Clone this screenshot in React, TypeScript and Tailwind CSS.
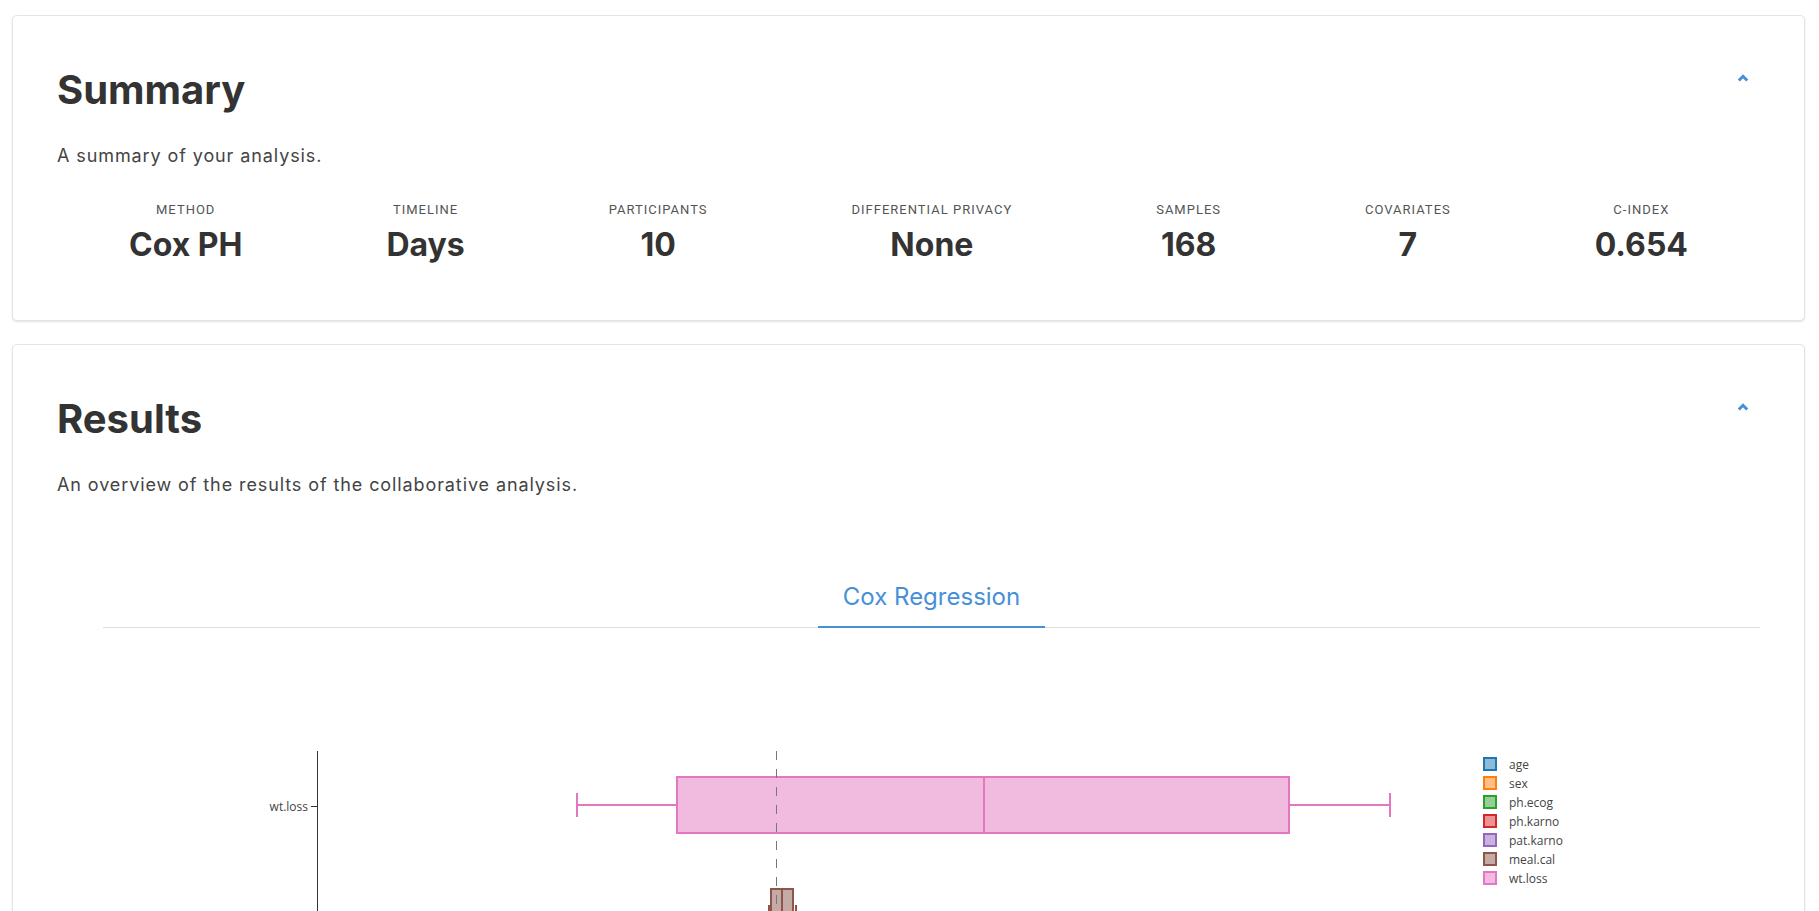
import React from 'react';

const BLUE = '#4790d8';

const stats = [
  { label: 'Method', value: 'Cox PH' },
  { label: 'Timeline', value: 'Days' },
  { label: 'Participants', value: '10' },
  { label: 'Differential Privacy', value: 'None' },
  { label: 'Samples', value: '168' },
  { label: 'Covariates', value: '7' },
  { label: 'C-Index', value: '0.654' },
];

const covariates = [
  { name: 'age', color: '#1f77b4', fill: '#8fbbd9' },
  { name: 'sex', color: '#ff7f0e', fill: '#ffbf86' },
  { name: 'ph.ecog', color: '#2ca02c', fill: '#95cf95' },
  { name: 'ph.karno', color: '#d62728', fill: '#eb9293' },
  { name: 'pat.karno', color: '#9467bd', fill: '#c9b3de' },
  { name: 'meal.cal', color: '#8c564b', fill: '#c5aaa5' },
  { name: 'wt.loss', color: '#e377c2', fill: '#f1bbe0' },
];

function Chevron() {
  return (
    <svg width="12" height="8" viewBox="0 0 12 8" fill="none">
      <polyline points="1.8,6.5 6,2.3 10.2,6.5" stroke={BLUE} strokeWidth="3" />
    </svg>
  );
}

function CardHeader({ title, subtitle }: { title: string; subtitle: string }) {
  return (
    <>
      <div className="flex items-start justify-between">
        <h2 className="text-[40px] leading-[48px] font-bold text-[#333333]">{title}</h2>
        <button className="mr-[11px] mt-[8px] flex h-[8px] w-[12px] items-center justify-center">
          <Chevron />
        </button>
      </div>
      <p className="mt-[28px] text-[18px] leading-[28px] tracking-[0.9px] text-[#444444]">{subtitle}</p>
    </>
  );
}

// one horizontal box: center y, box from q1..q3, median, whiskers lo..hi
function HBox({ cy, lo, q1, med, q3, hi, color, fill }: {
  cy: number; lo: number; q1: number; med: number; q3: number; hi: number; color: string; fill: string;
}) {
  return (
    <g stroke={color} strokeWidth="2">
      <line x1={lo} y1={cy} x2={q1} y2={cy} />
      <line x1={q3} y1={cy} x2={hi} y2={cy} />
      <line x1={lo} y1={cy - 12} x2={lo} y2={cy + 12} />
      <line x1={hi} y1={cy - 12} x2={hi} y2={cy + 12} />
      <rect x={q1} y={cy - 28} width={q3 - q1} height={56} fill={fill} />
      <line x1={med} y1={cy - 28} x2={med} y2={cy + 28} />
    </g>
  );
}

function CoxChart() {
  // only the rows that reach into the visible area; the rest sit below the fold
  const rows = [
    { name: 'wt.loss', cy: 177, lo: 520, q1: 620, med: 927, q3: 1232, hi: 1333, label: true },
    { name: 'meal.cal', cy: 289, lo: 712, q1: 714, med: 725, q3: 736, hi: 739, label: false },
  ];
  return (
    <svg width="1703" height="340" className="block" style={{ fontFamily: '"Open Sans", sans-serif' }}>
      <line x1="260.5" y1="123" x2="260.5" y2="340" stroke="#333" strokeWidth="1" />
      {rows.map((r) => {
        const c = covariates.find((v) => v.name === r.name)!;
        return (
          <g key={r.name}>
            {r.label && (
              <>
                <line x1="254" y1={r.cy + 1.5} x2="260" y2={r.cy + 1.5} stroke="#333" strokeWidth="1" />
                <text x="251" y={r.cy + 1} textAnchor="end" dominantBaseline="central" fontSize="12" fill="#444">
                  {r.name}
                </text>
              </>
            )}
            <HBox {...r} color={c.color} fill={c.fill} />
          </g>
        );
      })}
      <line x1="719.5" y1="123" x2="719.5" y2="340" stroke="#777" strokeWidth="1" strokeDasharray="9,9" />
      <g>
        {covariates.map((c, i) => {
          const cy = 136 + i * 19;
          return (
            <g key={c.name}>
              <rect x="1427" y={cy - 6} width="12" height="12" fill={c.fill} stroke={c.color} strokeWidth="2" />
              <text x="1452" y={cy} dominantBaseline="central" fontSize="12" fill="#444">
                {c.name}
              </text>
            </g>
          );
        })}
      </g>
    </svg>
  );
}

export default function App() {
  return (
    <div
      className="h-[911px] overflow-hidden bg-white pl-[12px] pr-[14px] pt-[15px]"
      style={{ fontFamily: 'Inter, "Noto Sans", sans-serif' }}
    >
      {/* Summary */}
      <section className="rounded-[5px] border border-[#e4e4e4] bg-white px-[44px] pb-[55px] pt-[50px] shadow-[0_1px_2px_rgba(0,0,0,0.12)]">
        <CardHeader title="Summary" subtitle="A summary of your analysis." />
        <div className="mt-[31px] flex justify-around">
          {stats.map((s) => (
            <div key={s.label} className="flex flex-col items-center">
              <span
                className="text-[13px] leading-[18px] uppercase tracking-[1px] text-[#555555]"
                style={{ fontFamily: 'Roboto, sans-serif' }}
              >
                {s.label}
              </span>
              <span className="mt-[6px] text-[32px] leading-[40px] font-bold text-[#333333]">{s.value}</span>
            </div>
          ))}
        </div>
      </section>

      {/* Results */}
      <section className="mt-[23px] rounded-[5px] border border-[#e4e4e4] bg-white px-[44px] pt-[50px] shadow-[0_1px_2px_rgba(0,0,0,0.12)]">
        <CardHeader title="Results" subtitle="An overview of the results of the collaborative analysis." />
        <div className="ml-[46px] mt-[82px] flex justify-center border-b border-[#dddddd]">
          <button className="-mb-px border-b-2 border-[#4790d8] px-[25px] pb-[13px] text-[24px] leading-[32px] text-[#4790d8]">
            Cox Regression
          </button>
        </div>
        <CoxChart />
      </section>
    </div>
  );
}
